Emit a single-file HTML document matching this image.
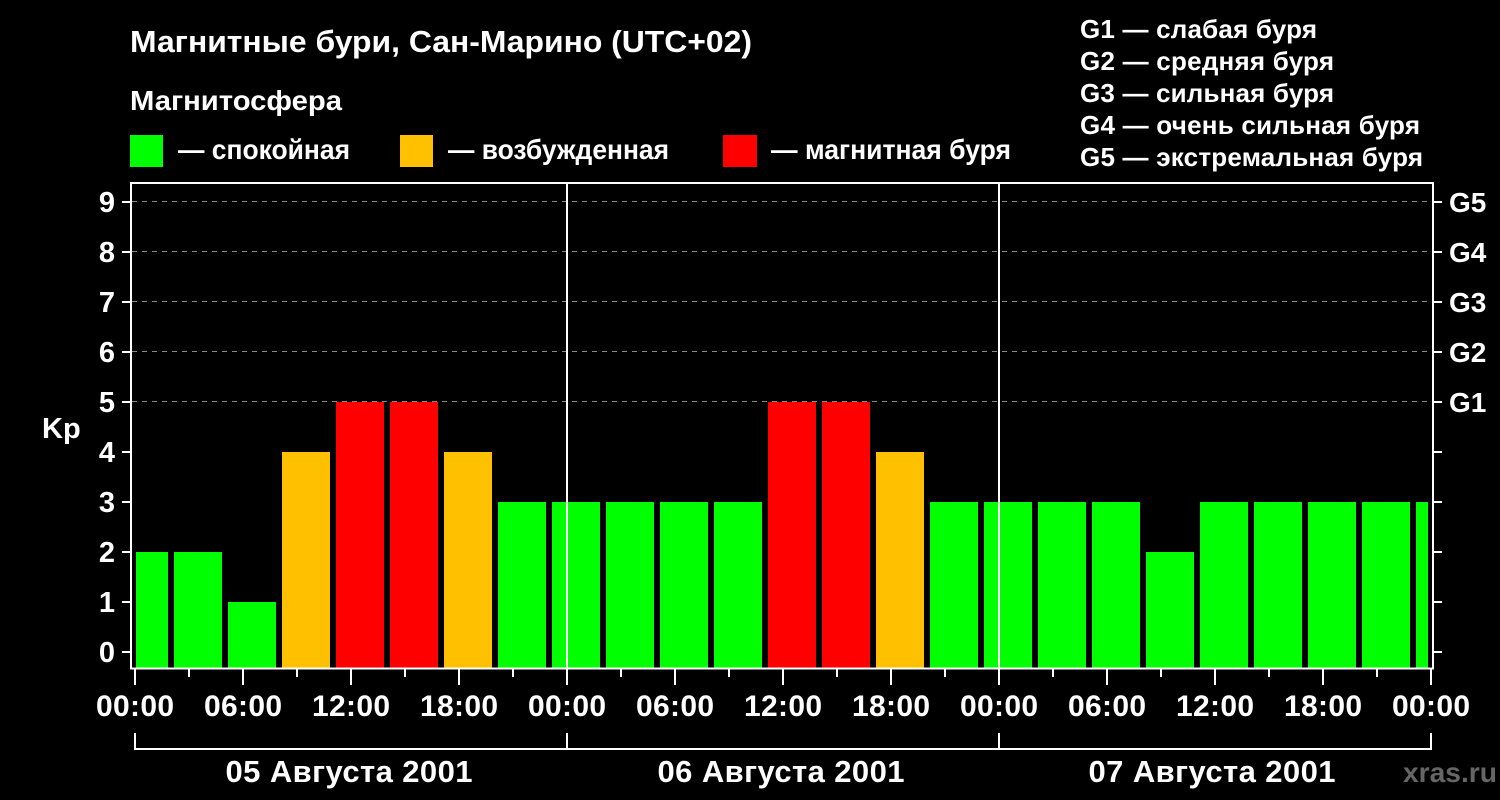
<!DOCTYPE html>
<html><head><meta charset="utf-8"><style>html,body{margin:0;padding:0;background:#000;width:1500px;height:800px;overflow:hidden}svg{display:block}text{font-family:"Liberation Sans",sans-serif;font-weight:bold;fill:#fff}</style></head><body>
<svg width="1500" height="800" viewBox="0 0 1500 800">
<rect width="1500" height="800" fill="#000"/>
<text x="130" y="52" font-size="31" textLength="622" lengthAdjust="spacingAndGlyphs">Магнитные бури, Сан-Марино (UTC+02)</text>
<text x="130" y="110" font-size="28" textLength="212" lengthAdjust="spacingAndGlyphs">Магнитосфера</text>
<rect x="130" y="135" width="33" height="32" fill="#00ff00"/>
<text x="178" y="159" font-size="28" textLength="172" lengthAdjust="spacingAndGlyphs">— спокойная</text>
<rect x="400" y="135" width="33" height="32" fill="#ffc000"/>
<text x="448" y="159" font-size="28" textLength="221" lengthAdjust="spacingAndGlyphs">— возбужденная</text>
<rect x="723" y="135" width="34" height="32" fill="#ff0000"/>
<text x="771" y="159" font-size="28" textLength="240" lengthAdjust="spacingAndGlyphs">— магнитная буря</text>
<g font-size="26" lengthAdjust="spacingAndGlyphs">
<text x="1080" y="38" textLength="237">G1 — слабая буря</text>
<text x="1080" y="70" textLength="254">G2 — средняя буря</text>
<text x="1080" y="102" textLength="254">G3 — сильная буря</text>
<text x="1080" y="134" textLength="340">G4 — очень сильная буря</text>
<text x="1080" y="166" textLength="343">G5 — экстремальная буря</text>
</g>
<g stroke="#888" stroke-width="1" stroke-dasharray="5,5">
<line x1="132" y1="201.5" x2="1432" y2="201.5"/><line x1="132" y1="251.5" x2="1432" y2="251.5"/><line x1="132" y1="301.5" x2="1432" y2="301.5"/><line x1="132" y1="351.5" x2="1432" y2="351.5"/><line x1="132" y1="401.5" x2="1432" y2="401.5"/>
</g>
<g>
<rect x="136" y="552" width="32" height="116" fill="#00ff00"/>
<rect x="174" y="552" width="48" height="116" fill="#00ff00"/>
<rect x="228" y="602" width="48" height="66" fill="#00ff00"/>
<rect x="282" y="452" width="48" height="216" fill="#ffc000"/>
<rect x="336" y="402" width="48" height="266" fill="#ff0000"/>
<rect x="390" y="402" width="48" height="266" fill="#ff0000"/>
<rect x="444" y="452" width="48" height="216" fill="#ffc000"/>
<rect x="498" y="502" width="48" height="166" fill="#00ff00"/>
<rect x="552" y="502" width="48" height="166" fill="#00ff00"/>
<rect x="606" y="502" width="48" height="166" fill="#00ff00"/>
<rect x="660" y="502" width="48" height="166" fill="#00ff00"/>
<rect x="714" y="502" width="48" height="166" fill="#00ff00"/>
<rect x="768" y="402" width="48" height="266" fill="#ff0000"/>
<rect x="822" y="402" width="48" height="266" fill="#ff0000"/>
<rect x="876" y="452" width="48" height="216" fill="#ffc000"/>
<rect x="930" y="502" width="48" height="166" fill="#00ff00"/>
<rect x="984" y="502" width="48" height="166" fill="#00ff00"/>
<rect x="1038" y="502" width="48" height="166" fill="#00ff00"/>
<rect x="1092" y="502" width="48" height="166" fill="#00ff00"/>
<rect x="1146" y="552" width="48" height="116" fill="#00ff00"/>
<rect x="1200" y="502" width="48" height="166" fill="#00ff00"/>
<rect x="1254" y="502" width="48" height="166" fill="#00ff00"/>
<rect x="1308" y="502" width="48" height="166" fill="#00ff00"/>
<rect x="1362" y="502" width="48" height="166" fill="#00ff00"/>
<rect x="1416" y="502" width="12" height="166" fill="#00ff00"/>
</g>
<g stroke="#fff" stroke-width="2" fill="none">
<path d="M131 183 H1433 V668.5 H131 Z"/>
<line x1="567" y1="183" x2="567" y2="668"/><line x1="999" y1="183" x2="999" y2="668"/>
<path d="M122 202H131M122 252H131M122 302H131M122 352H131M122 402H131M122 452H131M122 502H131M122 552H131M122 602H131M122 652H131"/>
<path d="M1433 202H1442M1433 252H1442M1433 302H1442M1433 352H1442M1433 402H1442M1433 452H1442M1433 502H1442M1433 552H1442M1433 602H1442M1433 652H1442"/>
<path d="M135 669V685M243 669V685M351 669V685M459 669V685M567 669V685M675 669V685M783 669V685M891 669V685M999 669V685M1107 669V685M1215 669V685M1323 669V685M1431 669V685"/>
<path d="M189 669V677M297 669V677M405 669V677M513 669V677M621 669V677M729 669V677M837 669V677M945 669V677M1053 669V677M1161 669V677M1269 669V677M1377 669V677"/>
<path d="M135 733V749H1431V733M567 733V749M999 733V749"/>
</g>
<g font-size="29" text-anchor="end">
<text x="115" y="212">9</text><text x="115" y="262">8</text><text x="115" y="312">7</text><text x="115" y="362">6</text><text x="115" y="412">5</text><text x="115" y="462">4</text><text x="115" y="512">3</text><text x="115" y="562">2</text><text x="115" y="612">1</text><text x="115" y="662">0</text>
</g>
<text x="42" y="438" font-size="29">Kp</text>
<g font-size="28">
<text x="1449" y="212">G5</text><text x="1449" y="262">G4</text><text x="1449" y="312">G3</text><text x="1449" y="362">G2</text><text x="1449" y="412">G1</text>
</g>
<g font-size="30" text-anchor="middle" lengthAdjust="spacingAndGlyphs">
<text x="135" y="716" textLength="78">00:00</text><text x="243" y="716" textLength="78">06:00</text><text x="351" y="716" textLength="78">12:00</text><text x="459" y="716" textLength="78">18:00</text><text x="567" y="716" textLength="78">00:00</text><text x="675" y="716" textLength="78">06:00</text><text x="783" y="716" textLength="78">12:00</text><text x="891" y="716" textLength="78">18:00</text><text x="999" y="716" textLength="78">00:00</text><text x="1107" y="716" textLength="78">06:00</text><text x="1215" y="716" textLength="78">12:00</text><text x="1323" y="716" textLength="78">18:00</text><text x="1431" y="716" textLength="78">00:00</text>
<text x="349" y="782" font-size="31" textLength="247">05 Августа 2001</text><text x="781" y="782" font-size="31" textLength="247">06 Августа 2001</text><text x="1212" y="782" font-size="31" textLength="247">07 Августа 2001</text>
</g>
<text x="1403" y="782" font-size="28" textLength="94" lengthAdjust="spacingAndGlyphs" style="fill:#666">xras.ru</text>
</svg>
</body></html>
